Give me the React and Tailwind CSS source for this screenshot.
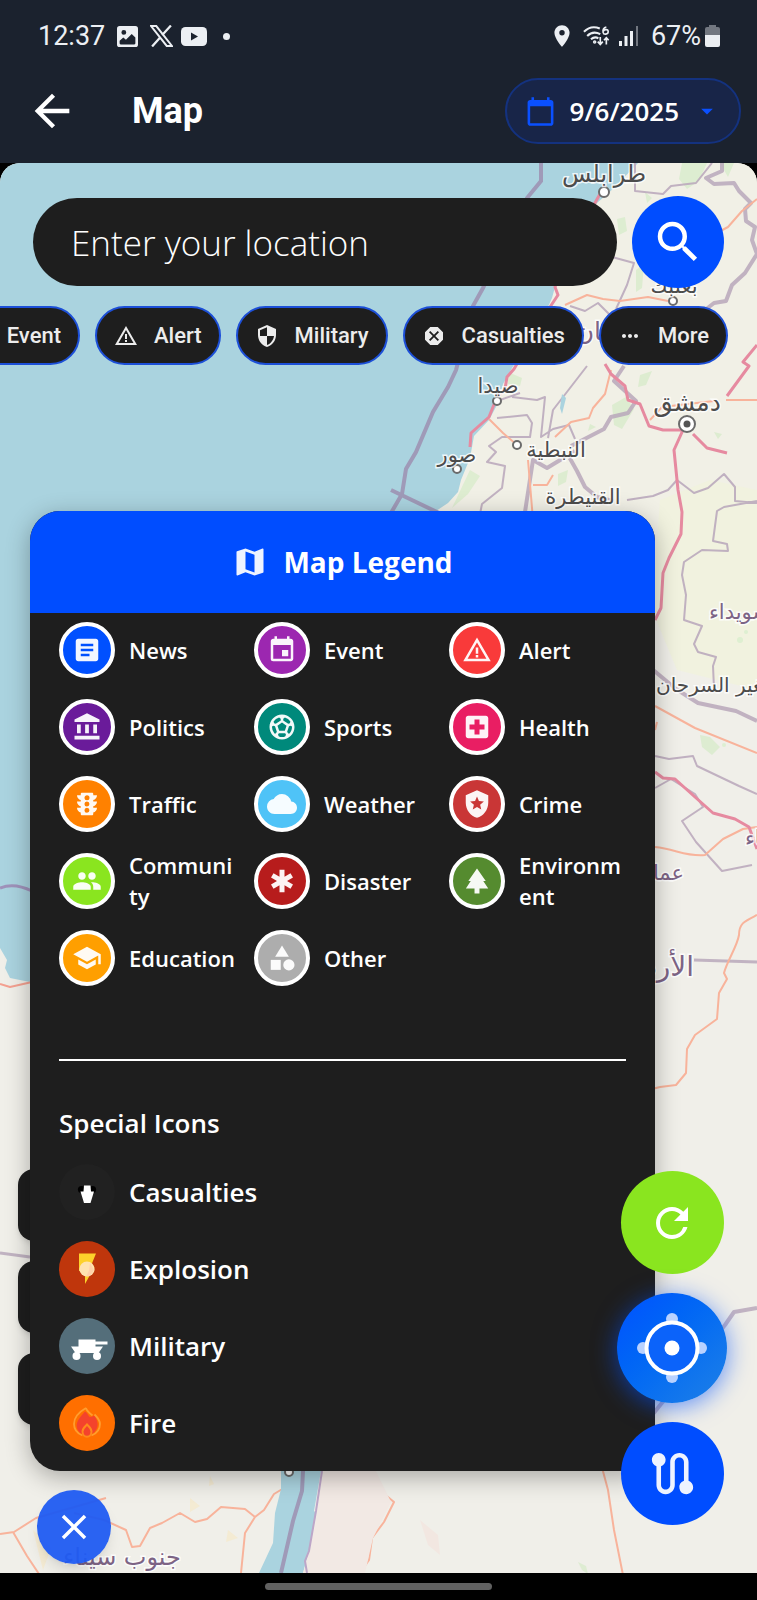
import React from "react";
import {
  MdArticle, MdEvent, MdWarningAmber, MdAccountBalance, MdSportsSoccer, MdLocalHospital,
  MdTraffic, MdCloud, MdLocalPolice, MdPeople, MdEmergency, MdPark, MdSchool, MdCategory,
  MdMap, MdSearch, MdSecurity, MdDangerous, MdMoreHoriz, MdRefresh, MdRoute, MdClose,
  MdArrowBack, MdCalendarToday, MdArrowDropDown, MdPlace,
} from "react-icons/md";

const CATEGORIES = [
  { label: "News", Icon: MdArticle, color: "bg-[#0050ff]" },
  { label: "Event", Icon: MdEvent, color: "bg-[#9c27b0]" },
  { label: "Alert", Icon: MdWarningAmber, color: "bg-[#f93a3a]" },
  { label: "Politics", Icon: MdAccountBalance, color: "bg-[#6a1b9a]" },
  { label: "Sports", Icon: MdSportsSoccer, color: "bg-[#00897b]" },
  { label: "Health", Icon: MdLocalHospital, color: "bg-[#e91e63]" },
  { label: "Traffic", Icon: MdTraffic, color: "bg-[#ff8100]" },
  { label: "Weather", Icon: MdCloud, color: "bg-[#4fc3f7]" },
  { label: "Crime", Icon: MdLocalPolice, color: "bg-[#c93636]" },
  { label: "Community", Icon: MdPeople, color: "bg-[#8ae51f]" },
  { label: "Disaster", Icon: MdEmergency, color: "bg-[#b71c1c]" },
  { label: "Environment", Icon: MdPark, color: "bg-[#558b2f]" },
  { label: "Education", Icon: MdSchool, color: "bg-[#ff9f00]" },
  { label: "Other", Icon: MdCategory, color: "bg-[#adadad]" },
];

const CHIPS = [
  { label: "Event", Icon: MdEvent },
  { label: "Alert", Icon: MdWarningAmber },
  { label: "Military", Icon: MdSecurity },
  { label: "Casualties", Icon: MdDangerous },
  { label: "More", Icon: MdMoreHoriz },
];

function CasualtiesIcon() {
  return (
    <svg viewBox="0 0 56 56" className="size-14" aria-hidden="true">
      <circle cx="28" cy="28" r="28" fill="#212121" />
      <circle cx="22.500" cy="25.500" r="3.600" fill="#000" />
      <circle cx="33.500" cy="25.500" r="3.600" fill="#000" />
      <path d="M25 21.500h6.500l.5 6h3L31.500 39h-6.500l-3.500-11.500h3z" fill="#fff" />
    </svg>
  );
}

function ExplosionIcon() {
  return (
    <svg viewBox="0 0 56 56" className="size-14" aria-hidden="true">
      <circle cx="28" cy="28" r="28" fill="#bf360c" />
      <path d="M20 12.500h17l-5.500 13.500h4L26 43v-13h-6z" fill="#fdd12b" />
      <circle cx="28" cy="28" r="7.600" fill="#ffe3b0" />
      <path d="M31 22l4 7-4 6-4 .5 3-6z" fill="#ffc9a8" opacity=".7" />
    </svg>
  );
}

function MilitaryIcon() {
  return (
    <svg viewBox="0 0 56 56" className="size-14" aria-hidden="true">
      <circle cx="28" cy="28" r="28" fill="#546e7a" />
      <g fill="#fff">
        <path d="M19.500 21.500h17v2h12v3h-12v2h7.500l-4.500 6.500H16.500L12 28.500h7.500z" />
        <circle cx="17.500" cy="38" r="4" />
        <circle cx="38" cy="38" r="4" />
      </g>
    </svg>
  );
}

function FireIcon() {
  return (
    <svg viewBox="0 0 56 56" className="size-14" aria-hidden="true">
      <circle cx="28" cy="28" r="28" fill="#ff6f00" />
      <path d="M26 16.500c4 3 3 5 5 5.500 2 0 3-1 4.500-1.500C38 25 39 28 38.500 31c-.8 5-5 9-10.500 9s-9.800-3.500-10.300-8.500C17.200 26 22 21 26 16.500z" fill="#f4432c" />
      <path d="M27 13c-7 4-12 9.500-12 16 0 5.500 3.500 9.500 8.500 11.500M27 13c.5 3 3.500 5 6.500 7.500M35.500 19.500C39 23 41 26 41 29c0 5.500-3.500 9.500-8.500 11.500" fill="none" stroke="#ff9d2e" strokeWidth="1.800" />
      <path d="M28 29.500c2.500 2.500 4.500 4 4.500 7s-2 5.200-4.500 5.200-4.500-2.200-4.500-5.200 2-4.500 4.500-7z" fill="#f4432c" stroke="#ff8a1c" strokeWidth="2" />
    </svg>
  );
}

const SPECIAL = [
  { label: "Casualties", Icon: CasualtiesIcon },
  { label: "Explosion", Icon: ExplosionIcon },
  { label: "Military", Icon: MilitaryIcon },
  { label: "Fire", Icon: FireIcon },
];

function StatusBar() {
  return (
    <div className="flex items-center justify-between pt-[18px] pr-[37px] pl-[38px] font-[Roboto,sans-serif] text-[27px] leading-9 text-[#eceff3]">
      <div className="flex items-center gap-3">
        <span>12:37</span>
        <svg viewBox="0 0 20 20" className="size-[21px]" aria-hidden="true">
          <path fillRule="evenodd" fill="#eceff3" d="M2.500 0h15A2.500 2.500 0 0 1 20 2.500v15a2.500 2.500 0 0 1-2.500 2.500h-15A2.500 2.500 0 0 1 0 17.500v-15A2.500 2.500 0 0 1 2.500 0zM2.500 16.500a1 1 0 0 0 1 1h13a1 1 0 0 0 1-1V11l-3.500-3.500L8.500 13 6 11l-3.500 3zM6.500 3.800a2.300 2.300 0 1 0 0 4.600 2.300 2.300 0 0 0 0-4.600z" />
        </svg>
        <svg viewBox="0 0 22 21" className="h-[22px] w-[23px]" fill="none" stroke="#eceff3" aria-hidden="true">
          <path d="M1 1h5l15 19h-5z" strokeWidth="1.900" />
          <path d="M20 .5l-8.300 9M9.700 12L2 20.500" strokeWidth="2.200" />
        </svg>
        <svg viewBox="0 0 26 19" className="-ml-1 h-[19px] w-[26px]" aria-hidden="true">
          <rect width="26" height="19" rx="4.500" fill="#eceff3" />
          <path d="M10 5.500v8l7-4z" fill="#1b222e" />
        </svg>
        <span className="ml-1 size-[7px] rounded-full bg-[#eceff3]" />
      </div>
      <div className="flex items-center gap-2">
        <MdPlace className="size-[26px]" />
        <svg viewBox="0 0 30 22" className="h-[22px] w-7" fill="none" stroke="#eceff3" strokeWidth="2.200" aria-hidden="true">
          <path d="M1 6.500C6 1.500 12 .5 18 3M4.500 11c4-4 9-4.500 14-2M8.500 14.500c3-2.500 5.500-2.500 8-1" />
          <circle cx="12.500" cy="17.500" r=".8" />
          <path d="M18.500 12v8M15.800 17l2.700 3 2.700-3M25 20v-7M22.500 15.500l2.500-2.700 2.500 2.700" strokeWidth="1.800" />
          <path d="M25 1.500c-3 .5-4 3-3.500 5.500.5 3 5.500 2.500 5.500-.5s-4-3-5.300-.5" strokeWidth="1.700" />
        </svg>
        <svg viewBox="0 0 20 20" className="mr-1 size-5" fill="#eceff3" aria-hidden="true">
          <rect x="0" y="15" width="3" height="5" />
          <rect x="5.500" y="10" width="3" height="10" />
          <rect x="11" y="5" width="3" height="15" />
          <rect x="17" y="0" width="2" height="20" fill="#727780" />
        </svg>
        <span className="flex items-center gap-1">
          67%
          <svg viewBox="0 0 15 22" className="h-[22px] w-[15px]" aria-hidden="true">
            <path d="M4 0h7v2h2a2 2 0 0 1 2 2v6H0V4a2 2 0 0 1 2-2h2z" fill="#727780" />
            <path d="M0 10h15v10a2 2 0 0 1-2 2H2a2 2 0 0 1-2-2z" fill="#eceff3" />
          </svg>
        </span>
      </div>
    </div>
  );
}

function MapBackground() {
  return (
    <svg
      viewBox="0 163 757 1410"
      preserveAspectRatio="xMidYMin slice"
      className="absolute inset-0 size-full"
      aria-hidden="true"
    >
      <rect y="163" width="757" height="1410" fill="#f0efe9" />
      <path d="M590 163h167v420l-80 60-80-120-160 0 20-60 50-80 60-120z" fill="#f1f0e6" />
      <path d="M660 500l50-20 47 10v200l-80-20-25-60z" fill="#f1f2df" />
      <g fill="#d5ebc8" opacity=".7">
        <path d="M682 163h25l-8 18-12 8-8-10zM720 163h14l-6 14zM636 270l8-6-2 24-6 4zM617 219l8-2 2 14-8 4zM640 375l12-4-6 14-8 2zM612 405l14-8 8 12-12 20-8-4zM558 474l10-4-2 12-8 4zM700 735l10 2 10 10-8 8-10-8zM714 432l8 2-4 5zM508 372l14 6-2 8-12-2zM470 470l10 6-12 18-16 14z" />
        <path d="M645 192l7 6-5 5zM590 424l6 3-8 4zM578 1562l8 4 2 8-6-4z" />
      </g>
      <g fill="#dcefd0" opacity=".9">
        <circle cx="740" cy="640" r="3" /><circle cx="746" cy="632" r="2" /><circle cx="724" cy="745" r="2" />
      </g>
      <path d="M0 163H638L614 188 597 203 570 245 555 287 552 298 547 309 530 340 512 368 503 384 497 405 489 420 474 436 470 458 461 480 458 492 448 503 430 515 300 700 30 982 10 978 0 984z" fill="#aad3df" />
      <path d="M0 948l7 12-2 8 8 16-13 4z" fill="#f0efe9" />
      <path d="M0 888c12-5 24-1 32 3" fill="none" stroke="#9f92ba" strokeWidth="3" />
      <g fill="none" stroke="#9f9ab8" strokeWidth="4">
        <path d="M541 163v18l-14 17-44 90-10 18-17 64-8 17-15 25-17 40-10 17-4 25-11 19-3 20" />
        <path d="M391 490l48 23" />
      </g>
      <g fill="none" stroke="#b9a8bb" strokeWidth="4" opacity=".85" strokeLinejoin="round">
        <path d="M722 163v8l-16 7 8 6 20-1 5 8 12 12-6 6 1 12 9 6-3 13 5 14-12 19-13 12-6 16-12 2-23 18-14 30" />
        <path d="M624 366l-10 15 22 20-8 12-17 4-7 12-33 17M575 451l-28 17-14-8-8 52M568 455l9 16 8 16 12 10 16 4" />
        <path d="M652 669l24 20 22 14 38 8 21 10" />
        <path d="M640 1430l85-105 9-13 23-4" />
        <path d="M0 1253l30 4" strokeWidth="3" />
        <path d="M694 960l63 2" strokeWidth="3" />
      </g>
      <g fill="none" stroke="#bbaabd" strokeWidth="2" opacity=".9" strokeLinejoin="round">
        <path d="M635 163v28l28 3 8-8 25-3 16-20M612 257l22 6-7 22-11 24M570 306l15 5 13-8 12 12M587 366l-34 44-5 28M512 397l25 3 8-3-4 40 12-8 16-4 6 14M500 400l20-7M497 418l30-3 5 8-2 14-28 0-13 9 7 6-9 10 18 4-3 22-20 16-4 20" />
        <path d="M627 500l26-4 15-6 9-10 17 13 14-5 16-14 11 13v14l22 2M757 501l-33 6-7 4-4 30 14 3 1 7-26-1-18 12-2 13 4 20-2 25 18 6-8 18 4 8 18 5-3 9 1 22" />
        <path d="M655 756l14 3 24-3 4 10 42 20 18 8M655 788l16-9 24 15 8 13-21 14 14 21 26 29 30-6" />
      </g>
      <g fill="none" stroke="#f8b39b" strokeWidth="2" strokeLinejoin="round">
        <path d="M757 199l-15 12-14 16-15 8M565 305l22-10 16 4 17 2 28-4 20 4M611 370l-6 24-12 14-4 10-18 4-16 15M489 419l14 14 14 12M528 460l5 60M533 485l14 0 6-10M726 400h31M650 420l12-13 52-6" />
        <path d="M655 706l40 22 62 25M655 730l2-8M655 847c20 2 32 10 50 8l18-16 20-10 14-2" />
        <path d="M757 915c-12 6-18 8-18 20-2 12-12 26-15 38l3 6-8 14-2 26-22 16-8 14-1 24-10 12-16 2-8 2-12 8" />
        <path d="M600 1460l8 30 6 40 10 50M375 1470v8l8 15 11 9-10 20-12 16-3 22-9 13" />
        <path d="M286 1474l-2 14-10 6-10 16-9 7-10-8-24-2-14 12-12 3-15-9-18 10-12 5-10 18-8 1-6-17-22-10-30-7M255 1517l-10 16-4 40M0 1534l14-2 22-14 70-20M13 1532l14 24 12 18" />
        <path d="M0 984l10 3 22-5" stroke="#f4a191" />
      </g>
      <g fill="none" stroke="#e68aa0" strokeWidth="3" strokeLinejoin="round">
        <path d="M605 185l-28 50-22 52 3 8-8 12-36 62-7 8-2 12-8 8-8 20-18 16-1 14" />
        <path d="M605 364l6 10 14 12 3 14 12 4 9 22 14 4 20 0-9 20 4 40 4 22-1 22-12 24-6 15-2 35-6 12M693 434l14 14 20 5" />
        <path d="M757 345l-14 17 6 4-22 30" />
        <path d="M655 772l8 6 12 1 20 18 18 16 22 6 14 8 8 22" />
      </g>
      <path d="M562 394l4 4-4 16-2-6z" fill="#aad3df" />
      <path d="M281 1471l40 0-7 40 2 2-7 40-6 20h-44l14-30 2-30 6-24z" fill="#aad3df" />
      <path d="M322 1471h54l15 31-18 36-8 35h-62l12-46z" fill="#f2e9e4" />
      <path d="M303 1471l-1 20-9 30-12 52" fill="none" stroke="#9f9ab8" strokeWidth="4" />
      <path d="M322 1471l-6 40-7 40-4 10 2 12" fill="none" stroke="#bda6c8" strokeWidth="2" />
      <path d="M190 1498l10 8-10 6zM228 1530l10 8-12 4zM33 1530l18 18-8 22zM210 1476l4 8-5 2z" fill="#f7e8c4" opacity=".6" />
      <path d="M420 1520l18 15 2 20-12-10z" fill="#f2e7e1" />
      <g fill="#fff" stroke="#6b6b6b" strokeWidth="2">
        <circle cx="604" cy="192" r="5" />
        <circle cx="673" cy="301" r="4" />
        <circle cx="497" cy="401" r="4" />
        <circle cx="517" cy="445" r="4" />
        <circle cx="457" cy="469" r="4" />
        <circle cx="289" cy="1472" r="4" />
        <circle cx="687" cy="424" r="8" />
      </g>
      <circle cx="687" cy="424" r="3.500" fill="#555" />
      <g
        fill="#4c4c4c"
        stroke="#fff"
        strokeWidth="3"
        strokeOpacity=".8"
        paintOrder="stroke"
        fontFamily="'DejaVu Sans', 'Noto Sans', sans-serif"
        fontSize="21"
        textAnchor="middle"
      >
        <text x="604" y="182" fontSize="24">طرابلس</text>
        <text x="674" y="293">بعلبك</text>
        <text x="498" y="393">صيدا</text>
        <text x="457" y="462">صور</text>
        <text x="556" y="457">النبطية</text>
        <text x="583" y="504">القنيطرة</text>
        <text x="687" y="411" fontSize="25">دمشق</text>
        <text x="656" y="692" fontSize="20" textAnchor="start">مغير السرحان</text>
        <g fill="#7d6485">
          <text x="600" y="340" fontSize="25">لبنان</text>
          <text x="709" y="619" textAnchor="start">السويداء</text>
          <text x="684" y="880" textAnchor="end">عمان</text>
          <text x="745" y="845" textAnchor="start">الزرقاء</text>
          <text x="694" y="976" fontSize="28" textAnchor="end">الأردن</text>
          <text x="122" y="1565" fontSize="24">جنوب سيناء</text>
        </g>
      </g>
    </svg>
  );
}

function LocateIcon() {
  return (
    <svg viewBox="0 0 72 72" className="size-[72px]" aria-hidden="true">
      <g fill="#b9d2ff">
        <circle cx="36" cy="7" r="6" />
        <circle cx="36" cy="65" r="6" />
        <circle cx="7" cy="36" r="6" />
        <circle cx="65" cy="36" r="6" />
      </g>
      <circle cx="36" cy="36" r="25.500" fill="#0b63fa" stroke="#fff" strokeWidth="4" />
      <circle cx="36" cy="36" r="7.500" fill="#fff" />
    </svg>
  );
}

function Legend() {
  return (
    <section className="relative overflow-hidden rounded-[30px] bg-[#1e1e1e] text-white shadow-[0_6px_24px_rgba(0,0,0,0.3)]">
      <h2 className="flex h-[102px] items-center justify-center gap-[15px] bg-[#004dff] text-[28px] font-bold">
        <MdMap className="size-9 text-[#eef3ff]" />
        Map Legend
      </h2>
      <ul className="grid auto-rows-[56px] grid-cols-3 gap-x-[18px] gap-y-[21px] px-[29px] pt-[9px]">
        {CATEGORIES.map(({ label, Icon, color }) => (
          <li key={label} className="flex items-center gap-[14px]">
            <span className={`flex size-14 shrink-0 items-center justify-center rounded-full border-4 border-white ${color}`}>
              <Icon className="size-[30px] text-white/95" />
            </span>
            <span className="min-w-0 text-[22px] leading-[31px] font-semibold break-all">{label}</span>
          </li>
        ))}
      </ul>
      <hr className="mx-[29px] mt-[73px] border-t-2 border-white" />
      <div className="px-[29px] pb-5">
        <h3 className="mt-11 text-[26px] leading-9 font-semibold">Special Icons</h3>
        <ul className="mt-[23px] flex flex-col gap-[21px]">
          {SPECIAL.map(({ label, Icon }) => (
            <li key={label} className="flex items-center gap-[14px] text-[26px] leading-9 font-semibold">
              <Icon />
              {label}
            </li>
          ))}
        </ul>
      </div>
    </section>
  );
}

export default function App() {
  return (
    <div className="flex min-h-screen flex-col bg-black font-['Open_Sans',sans-serif]">
      <header className="bg-[#1b222e] pb-[19px]">
        <StatusBar />
        <div className="flex items-center pt-6 pr-4 pl-[26px]">
          <button aria-label="Back" className="text-white">
            <MdArrowBack className="size-[52px]" />
          </button>
          <h1 className="ml-[54px] font-[Roboto,sans-serif] text-[36px] leading-10 font-bold text-white">Map</h1>
          <button className="ml-auto flex h-[66px] items-center gap-[14px] rounded-full border-2 border-[#14327f] bg-[#182548] pr-[18px] pl-[18px] text-[26px] font-semibold text-white">
            <MdCalendarToday className="size-[31px] text-[#0a50ff]" />
            <span>9/6/2025</span>
            <MdArrowDropDown className="size-7 text-[#0a50ff]" />
          </button>
        </div>
      </header>

      <main className="relative flex-1 overflow-hidden rounded-t-[20px] pt-[33px]">
        <MapBackground />

        <form className="relative flex items-center gap-[15px] px-[33px]">
          <input
            type="text"
            aria-label="Location"
            placeholder="Enter your location"
            className="h-[88px] min-w-0 flex-1 rounded-full bg-[#1e1e1e] px-[38px] text-[35px] font-light text-white placeholder:text-white"
          />
          <button type="button" aria-label="Search" className="flex size-[92px] items-center justify-center rounded-full bg-[#004dff] text-white">
            <MdSearch className="size-[54px]" />
          </button>
        </form>

        <nav aria-label="Filters" className="relative mt-[18px] flex justify-end gap-[15px] overflow-hidden pr-[29px]">
          {CHIPS.map(({ label, Icon }) => (
            <button
              key={label}
              className="flex h-[59px] shrink-0 items-center gap-4 rounded-full border-2 border-[#1c4fd8] bg-[#1e1e1e] px-[17px] font-[Roboto,sans-serif] text-[22px] font-medium text-[#ececec]"
            >
              <Icon className="size-6" />
              {label}
            </button>
          ))}
        </nav>

        <div className="relative mt-[146px] mr-[102px] ml-[30px]">
          <div className="absolute bottom-[46px] -left-3 flex flex-col gap-5">
            <button aria-label="Layer one" className="h-[72px] w-16 rounded-2xl bg-[#1e1e1e] shadow-md" />
            <button aria-label="Layer two" className="h-[72px] w-16 rounded-2xl bg-[#1e1e1e] shadow-md" />
            <button aria-label="Layer three" className="h-[72px] w-16 rounded-2xl bg-[#1e1e1e] shadow-md" />
          </div>
          <Legend />
        </div>

        <button aria-label="Close legend" className="relative mt-[19px] mb-[9px] ml-[37px] flex size-[74px] items-center justify-center rounded-full bg-[#1f5bf2]/95 text-white shadow-lg">
          <MdClose className="size-[42px]" />
        </button>

        <div className="absolute right-[30px] bottom-12 flex flex-col items-center gap-[19px] text-white">
          <button aria-label="Refresh" className="flex size-[103px] items-center justify-center rounded-full bg-[#8ae51f]">
            <MdRefresh className="size-12" />
          </button>
          <button aria-label="My location" className="flex size-[110px] items-center justify-center rounded-full bg-linear-to-br from-[#0050ff] to-[#1e80e6] shadow-[0_4px_24px_rgba(0,80,255,0.6)]">
            <LocateIcon />
          </button>
          <button aria-label="Route" className="flex size-[103px] items-center justify-center rounded-full bg-[#004dff]">
            <MdRoute className="size-[55px] text-[#eef3ff]" />
          </button>
        </div>
      </main>

      <footer className="flex h-[27px] items-center justify-center bg-black">
        <span className="h-[7px] w-[30%] rounded-full bg-[#616161]" />
      </footer>
    </div>
  );
}
